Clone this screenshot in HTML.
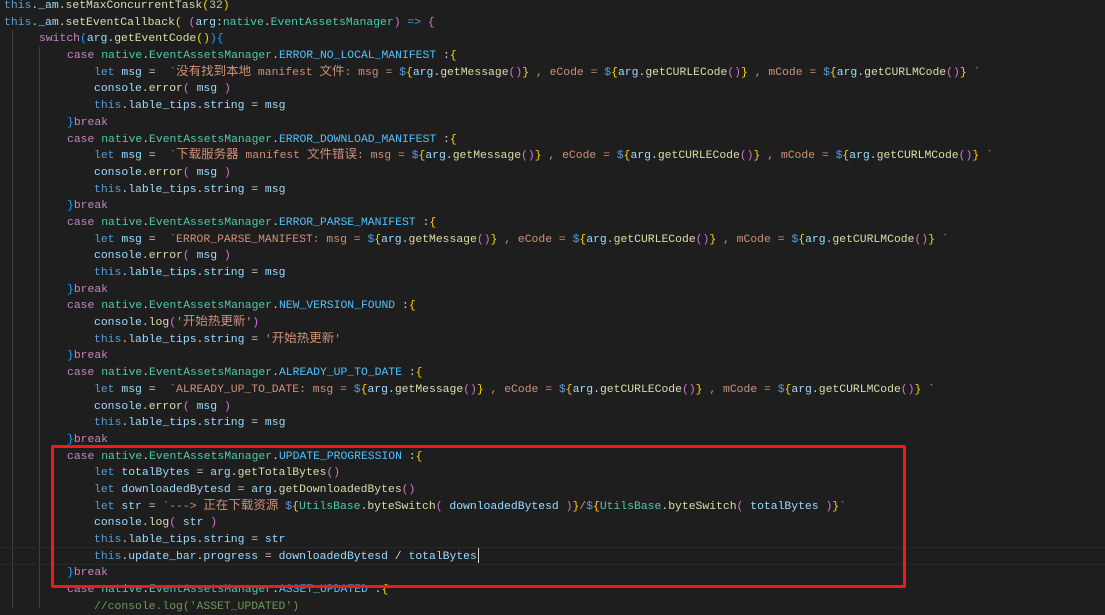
<!DOCTYPE html>
<html><head><meta charset="utf-8"><style>
html,body{margin:0;padding:0;background:#1e1e1e;width:1105px;height:608px;overflow:hidden;}
#c{position:absolute;top:-2px;left:0;font-family:"Liberation Mono","Noto Sans CJK SC",monospace;font-size:11.4px;color:#d4d4d4;}
.l{height:16.7px;line-height:16.7px;white-space:pre;overflow:hidden;}
.i0{padding-left:4px}.i1{padding-left:39px}.i2{padding-left:67px}.i3{padding-left:94px}
.t{color:#569cd6}.f{color:#dcdcaa}.v{color:#9cdcfe}.k{color:#c586c0}.c{color:#4ec9b0}.n{color:#4fc1ff}.s{color:#ce9178}.y{color:#ffd700}.p{color:#da70d6}.b{color:#179fff}.g{color:#6a9955}.num{color:#b5cea8}
.cj{font-size:12.5px;line-height:10px}
.guide{position:absolute;width:1px;background:#404040;}
#box{position:absolute;left:51px;top:445px;width:849px;height:137px;border:3px solid #f01a1a;border-radius:2px;}
#hl{position:absolute;left:0;top:547px;width:1105px;height:16px;border-top:1px solid #282828;border-bottom:1px solid #282828;}
#cur{position:absolute;left:478px;top:548px;width:1px;height:15px;background:#d4d4d4;}
</style></head><body>
<div class="guide" style="left:12px;top:30px;height:578px"></div>
<div class="guide" style="left:39px;top:47px;height:561px"></div>
<div id="hl"></div>
<div id="c">
<div class="l i0"><span class="t">this</span>.<span class="v">_am</span>.<span class="f">setMaxConcurrentTask</span><span class="y">(</span><span class="num">32</span><span class="y">)</span></div>
<div class="l i0"><span class="t">this</span>.<span class="v">_am</span>.<span class="f">setEventCallback</span><span class="y">(</span> <span class="p">(</span><span class="v">arg</span>:<span class="c">native</span>.<span class="c">EventAssetsManager</span><span class="p">)</span> <span class="t">=&gt;</span> <span class="p">{</span></div>
<div class="l i1"><span class="k">switch</span><span class="b">(</span><span class="v">arg</span>.<span class="f">getEventCode</span><span class="y">()</span><span class="b">)</span><span class="b">{</span></div>
<div class="l i2"><span class="k">case</span> <span class="c">native</span>.<span class="c">EventAssetsManager</span>.<span class="n">ERROR_NO_LOCAL_MANIFEST</span> :<span class="y">{</span></div>
<div class="l i3"><span class="t">let</span> <span class="v">msg</span> =  <span class="s">`<span class="cj">没有找到本地</span> manifest <span class="cj">文件</span>: msg = </span><span class="t">$</span><span class="y">{</span><span class="v">arg</span>.<span class="f">getMessage</span><span class="p">()</span><span class="y">}</span><span class="s"> , eCode = </span><span class="t">$</span><span class="y">{</span><span class="v">arg</span>.<span class="f">getCURLECode</span><span class="p">()</span><span class="y">}</span><span class="s"> , mCode = </span><span class="t">$</span><span class="y">{</span><span class="v">arg</span>.<span class="f">getCURLMCode</span><span class="p">()</span><span class="y">}</span><span class="s"> `</span></div>
<div class="l i3"><span class="v">console</span>.<span class="f">error</span><span class="p">(</span> <span class="v">msg</span> <span class="p">)</span></div>
<div class="l i3"><span class="t">this</span>.<span class="v">lable_tips</span>.<span class="v">string</span> = <span class="v">msg</span></div>
<div class="l i2"><span class="b">}</span><span class="k">break</span></div>
<div class="l i2"><span class="k">case</span> <span class="c">native</span>.<span class="c">EventAssetsManager</span>.<span class="n">ERROR_DOWNLOAD_MANIFEST</span> :<span class="y">{</span></div>
<div class="l i3"><span class="t">let</span> <span class="v">msg</span> =  <span class="s">`<span class="cj">下载服务器</span> manifest <span class="cj">文件错误</span>: msg = </span><span class="t">$</span><span class="y">{</span><span class="v">arg</span>.<span class="f">getMessage</span><span class="p">()</span><span class="y">}</span><span class="s"> , eCode = </span><span class="t">$</span><span class="y">{</span><span class="v">arg</span>.<span class="f">getCURLECode</span><span class="p">()</span><span class="y">}</span><span class="s"> , mCode = </span><span class="t">$</span><span class="y">{</span><span class="v">arg</span>.<span class="f">getCURLMCode</span><span class="p">()</span><span class="y">}</span><span class="s"> `</span></div>
<div class="l i3"><span class="v">console</span>.<span class="f">error</span><span class="p">(</span> <span class="v">msg</span> <span class="p">)</span></div>
<div class="l i3"><span class="t">this</span>.<span class="v">lable_tips</span>.<span class="v">string</span> = <span class="v">msg</span></div>
<div class="l i2"><span class="b">}</span><span class="k">break</span></div>
<div class="l i2"><span class="k">case</span> <span class="c">native</span>.<span class="c">EventAssetsManager</span>.<span class="n">ERROR_PARSE_MANIFEST</span> :<span class="y">{</span></div>
<div class="l i3"><span class="t">let</span> <span class="v">msg</span> =  <span class="s">`ERROR_PARSE_MANIFEST: msg = </span><span class="t">$</span><span class="y">{</span><span class="v">arg</span>.<span class="f">getMessage</span><span class="p">()</span><span class="y">}</span><span class="s"> , eCode = </span><span class="t">$</span><span class="y">{</span><span class="v">arg</span>.<span class="f">getCURLECode</span><span class="p">()</span><span class="y">}</span><span class="s"> , mCode = </span><span class="t">$</span><span class="y">{</span><span class="v">arg</span>.<span class="f">getCURLMCode</span><span class="p">()</span><span class="y">}</span><span class="s"> `</span></div>
<div class="l i3"><span class="v">console</span>.<span class="f">error</span><span class="p">(</span> <span class="v">msg</span> <span class="p">)</span></div>
<div class="l i3"><span class="t">this</span>.<span class="v">lable_tips</span>.<span class="v">string</span> = <span class="v">msg</span></div>
<div class="l i2"><span class="b">}</span><span class="k">break</span></div>
<div class="l i2"><span class="k">case</span> <span class="c">native</span>.<span class="c">EventAssetsManager</span>.<span class="n">NEW_VERSION_FOUND</span> :<span class="y">{</span></div>
<div class="l i3"><span class="v">console</span>.<span class="f">log</span><span class="p">(</span><span class="s">'<span class="cj">开始热更新</span>'</span><span class="p">)</span></div>
<div class="l i3"><span class="t">this</span>.<span class="v">lable_tips</span>.<span class="v">string</span> = <span class="s">'<span class="cj">开始热更新</span>'</span></div>
<div class="l i2"><span class="b">}</span><span class="k">break</span></div>
<div class="l i2"><span class="k">case</span> <span class="c">native</span>.<span class="c">EventAssetsManager</span>.<span class="n">ALREADY_UP_TO_DATE</span> :<span class="y">{</span></div>
<div class="l i3"><span class="t">let</span> <span class="v">msg</span> =  <span class="s">`ALREADY_UP_TO_DATE: msg = </span><span class="t">$</span><span class="y">{</span><span class="v">arg</span>.<span class="f">getMessage</span><span class="p">()</span><span class="y">}</span><span class="s"> , eCode = </span><span class="t">$</span><span class="y">{</span><span class="v">arg</span>.<span class="f">getCURLECode</span><span class="p">()</span><span class="y">}</span><span class="s"> , mCode = </span><span class="t">$</span><span class="y">{</span><span class="v">arg</span>.<span class="f">getCURLMCode</span><span class="p">()</span><span class="y">}</span><span class="s"> `</span></div>
<div class="l i3"><span class="v">console</span>.<span class="f">error</span><span class="p">(</span> <span class="v">msg</span> <span class="p">)</span></div>
<div class="l i3"><span class="t">this</span>.<span class="v">lable_tips</span>.<span class="v">string</span> = <span class="v">msg</span></div>
<div class="l i2"><span class="b">}</span><span class="k">break</span></div>
<div class="l i2"><span class="k">case</span> <span class="c">native</span>.<span class="c">EventAssetsManager</span>.<span class="n">UPDATE_PROGRESSION</span> :<span class="y">{</span></div>
<div class="l i3"><span class="t">let</span> <span class="v">totalBytes</span> = <span class="v">arg</span>.<span class="f">getTotalBytes</span><span class="p">()</span></div>
<div class="l i3"><span class="t">let</span> <span class="v">downloadedBytesd</span> = <span class="v">arg</span>.<span class="f">getDownloadedBytes</span><span class="p">()</span></div>
<div class="l i3"><span class="t">let</span> <span class="v">str</span> = <span class="s">`---&gt; <span class="cj">正在下载资源</span> </span><span class="t">$</span><span class="y">{</span><span class="c">UtilsBase</span>.<span class="f">byteSwitch</span><span class="p">(</span> <span class="v">downloadedBytesd</span> <span class="p">)</span><span class="y">}</span><span class="s">/</span><span class="t">$</span><span class="y">{</span><span class="c">UtilsBase</span>.<span class="f">byteSwitch</span><span class="p">(</span> <span class="v">totalBytes</span> <span class="p">)</span><span class="y">}</span><span class="s">`</span></div>
<div class="l i3"><span class="v">console</span>.<span class="f">log</span><span class="p">(</span> <span class="v">str</span> <span class="p">)</span></div>
<div class="l i3"><span class="t">this</span>.<span class="v">lable_tips</span>.<span class="v">string</span> = <span class="v">str</span></div>
<div class="l i3"><span class="t">this</span>.<span class="v">update_bar</span>.<span class="v">progress</span> = <span class="v">downloadedBytesd</span> / <span class="v">totalBytes</span></div>
<div class="l i2"><span class="b">}</span><span class="k">break</span></div>
<div class="l i2"><span class="k">case</span> <span class="c">native</span>.<span class="c">EventAssetsManager</span>.<span class="n">ASSET_UPDATED</span> :<span class="y">{</span></div>
<div class="l i3"><span class="g">//console.log('ASSET_UPDATED')</span></div>
</div>
<div id="cur"></div>
<div id="box"></div>
</body></html>
